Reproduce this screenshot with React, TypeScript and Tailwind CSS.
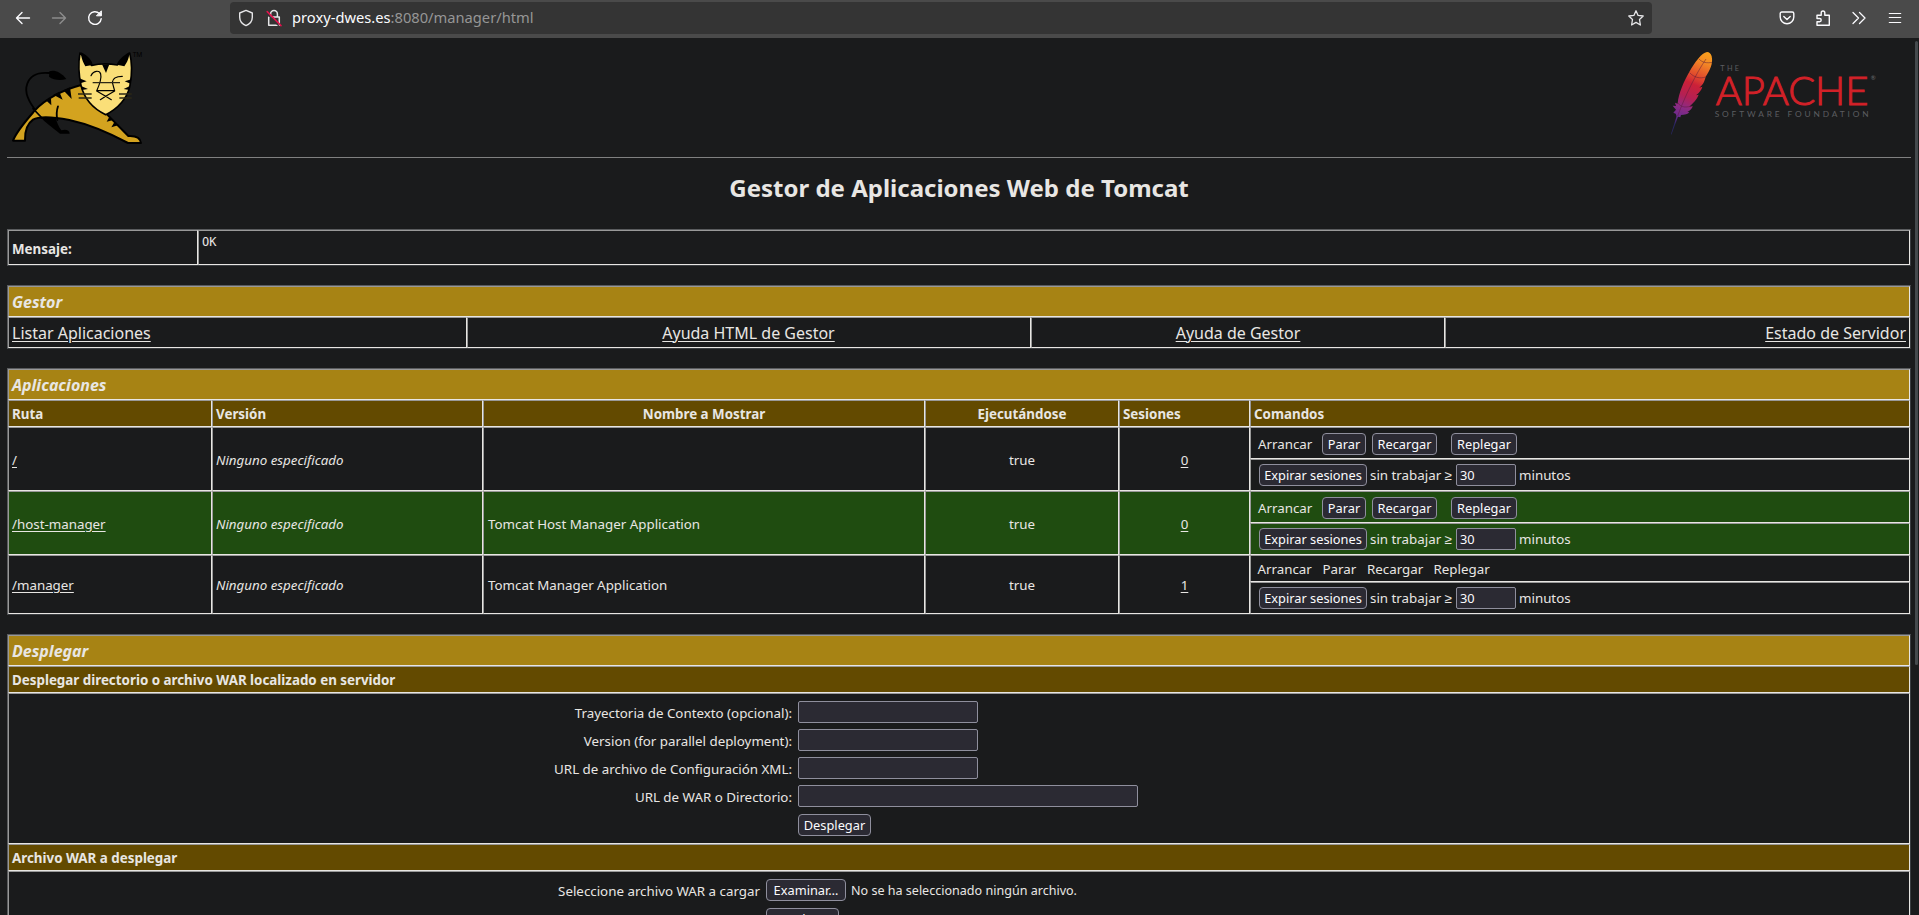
import type { ReactNode } from "react";

const CELL = "border border-t-[#999999] border-l-[#999999] border-r-[#e8e6e3] border-b-[#e8e6e3]";
const FRAME = "w-[1904px] border border-t-[#5a5c5e] border-l-[#5a5c5e] border-r-[#3a3d40] border-b-[#3a3d40]";

function Title({ children }: { children: ReactNode }) {
  return (
    <div className={`${CELL} flex h-[31px] items-center bg-[#a78314] px-[3px] text-[16px] font-bold italic`}>
      {children}
    </div>
  );
}

function Header({ children, className = "" }: { children: ReactNode; className?: string }) {
  return (
    <div className={`${CELL} flex h-[27px] items-center bg-[#634a00] px-[3px] pt-px text-[13.37px] font-bold ${className}`}>
      {children}
    </div>
  );
}

function Button({ children, className = "" }: { children: ReactNode; className?: string }) {
  return (
    <button
      className={`flex h-[22px] items-center justify-center rounded-[4px] border border-[#8f8f9d] bg-[#2b2a33] pt-px text-[12.8px] whitespace-nowrap text-[#fbfbfe] ${className}`}
    >
      {children}
    </button>
  );
}

function Link({ children }: { children: ReactNode }) {
  return <a className="underline decoration-1 underline-offset-2">{children}</a>;
}

interface AppRow {
  path: string;
  name: string;
  sessions: number;
  self?: boolean;
  even?: boolean;
}

const apps: AppRow[] = [
  { path: "/", name: "", sessions: 0 },
  { path: "/host-manager", name: "Tomcat Host Manager Application", sessions: 0, even: true },
  { path: "/manager", name: "Tomcat Manager Application", sessions: 1, self: true },
];

function ApplicationRow({ app }: { app: AppRow }) {
  const bg = app.even ? "bg-[#1f4c10]" : "";
  return (
    <div className={`grid grid-cols-[204px_271px_442px_194px_131px_660px] text-[13.33px] ${bg}`}>
      <div className={`${CELL} flex items-center px-[3px] pt-[3px]`}>
        <Link>{app.path}</Link>
      </div>
      <div className={`${CELL} flex items-center px-[3px] pt-[3px] italic`}>Ninguno especificado</div>
      <div className={`${CELL} flex items-center px-[4px] pt-[3px]`}>{app.name}</div>
      <div className={`${CELL} flex items-center justify-center pt-[3px]`}>true</div>
      <div className={`${CELL} flex items-center justify-center pt-[3px]`}>
        <Link>{app.sessions}</Link>
      </div>
      <div>
        {app.self ? (
          <div className={`${CELL} flex h-[27px] items-center pt-[3px] pl-[6.5px]`}>
            <span className="w-[65px]">Arrancar</span>
            <span className="w-[44.5px]">Parar</span>
            <span className="w-[66.5px]">Recargar</span>
            <span>Replegar</span>
          </div>
        ) : (
          <div className={`${CELL} flex h-[32px] items-center pt-[2px] pl-[7px]`}>
            <span className="w-[64px] pt-px">Arrancar</span>
            <Button className="w-[44px]">Parar</Button>
            <Button className="ml-[6px] w-[65px]">Recargar</Button>
            <Button className="ml-[14px] w-[66px]">Replegar</Button>
          </div>
        )}
        <div className={`${CELL} flex h-[32px] items-center pl-[8px]`}>
          <Button className="w-[108px]">Expirar sesiones</Button>
          <span className="ml-[3px] w-[86px] pt-px whitespace-nowrap">sin trabajar ≥</span>
          <input
            defaultValue="30"
            className="h-[22px] w-[60px] rounded-[2px] border border-[#8f8f9d] bg-[#2b2a33] px-[3px] text-[12.8px] text-[#fbfbfe]"
          />
          <span className="ml-[3px] pt-px">minutos</span>
        </div>
      </div>
    </div>
  );
}

function Field({ label, className }: { label: string; className: string }) {
  return (
    <div className="flex h-[28px] items-center">
      <label className="w-[783px] pt-[3px] text-right">{label}</label>
      <input className={`ml-[6px] h-[22px] rounded-[2px] border border-[#8f8f9d] bg-[#2b2a33] ${className}`} />
    </div>
  );
}

function NavButton({ children, dim }: { children: ReactNode; dim?: boolean }) {
  return (
    <div className={`flex h-9 w-9 items-center justify-center ${dim ? "text-[#8c8c8c]" : "text-[#fbfbfe]"}`}>
      <svg
        width="16"
        height="16"
        viewBox="0 0 16 16"
        fill="none"
        stroke="currentColor"
        strokeWidth="1.4"
        strokeLinecap="round"
        strokeLinejoin="round"
      >
        {children}
      </svg>
    </div>
  );
}

function Toolbar() {
  return (
    <div className="flex h-[38px] items-start bg-[#4a4a4a] pl-[5px] pr-[6px]">
      <NavButton>
        <path d="M14.5 8H1.8M7 2.5 1.5 8 7 13.5" />
      </NavButton>
      <NavButton dim>
        <path d="M1.5 8h12.7M9 2.5 14.5 8 9 13.5" />
      </NavButton>
      <NavButton>
        <path d="M14.2 8.6A6.3 6.3 0 1 1 12.4 3.6L14 5" />
        <path d="M14.4 1.2V5.8H9.8Z" fill="currentColor" strokeWidth="1" />
      </NavButton>
      <div className="mt-[2px] ml-[117px] flex h-[32px] w-[1422px] items-center rounded-[4px] bg-[#343434] pl-[8px] pr-[8px]">
        <svg width="16" height="18" viewBox="0 0 16 18" fill="none" stroke="#e6e6e8" strokeWidth="1.4" strokeLinejoin="round">
          <path d="M8 1.4 14.3 4v4.200c0 3.600-2.200 6.600-6.300 8.400C3.900 14.800 1.700 11.800 1.700 8.200V4Z" />
        </svg>
        <svg className="ml-[12px]" width="16" height="18" viewBox="0 0 16 18" fill="none">
          <path
            d="M4.600 8V5A3.400 3.400 0 0 1 11.400 5V8M2.700 8H13.300V16.300H2.700Z"
            stroke="#e6e6e8"
            strokeWidth="1.5"
            strokeLinejoin="round"
          />
          <path d="M1 4.600 12.800 16.800" stroke="#343434" strokeWidth="1.600" />
          <path d="M1.200 2.600 15 16.600" stroke="#e2124c" strokeWidth="1.500" strokeLinecap="round" />
        </svg>
        <span className="ml-[10px] flex-1 pb-px text-[14.7px] text-[#fbfbfe]">
          proxy-dwes.es<span className="text-[#969696]">:8080/manager/html</span>
        </span>
        <svg width="16" height="16" viewBox="0 0 16 16" fill="none" stroke="#e6e6e8" strokeWidth="1.300" strokeLinejoin="round">
          <path d="M8 .8 10.100 5.400 15.200 6 11.500 9.500 12.400 15 8 12.400 3.600 15 4.500 9.500.8 6 5.900 5.400Z" />
        </svg>
      </div>
      <div className="ml-auto flex">
        <NavButton>
          <path d="M2.800 2H13.200A1.600 1.600 0 0 1 14.800 3.600V7A6.800 6.800 0 0 1 1.200 7V3.600A1.600 1.600 0 0 1 2.800 2ZM4.800 6.500 8 9.600 11.200 6.500" />
        </NavButton>
        <NavButton>
          <path d="M2 15.200V11.700H4.600A1.600 1.600 0 0 0 4.600 8.500H2V5.200H6.200V2.800A1.800 1.800 0 0 1 9.800 2.800V5.200H14.300V15.200Z" />
        </NavButton>
        <NavButton>
          <path d="M2 2.500 7.500 8 2 13.500M8.500 2.500 14 8 8.500 13.500" strokeWidth="1.300" />
        </NavButton>
        <NavButton>
          <path d="M2.300 3.500H13.700M2.300 7.500H13.700M2.300 12.500H13.700" strokeWidth="1.200" />
        </NavButton>
      </div>
    </div>
  );
}

function TomcatLogo() {
  return (
    <svg width="140" height="119" viewBox="21 24 420 357" fill="none" strokeLinecap="round" strokeLinejoin="round">
      <path d="M126 264C93 228 75 199 79 172C84 141 108 125 148 129" stroke="#000" strokeWidth="5.500" />
      <path d="M148 124C163 119 182 126 199 147C181 152 160 150 147 140Z" fill="#000" />
      <path d="M122 262 166 260C170 277 177 292 184 301C198 297 209 301 209 311H180C155 292 134 276 122 262Z" fill="#000" />
      <path
        d="M246 164C194 177 135 207 104 242C78 272 50 303 39 332H75C74 305 82 281 99 269C119 257 162 261 208 270C273 284 328 309 384 339H423C421 321 403 317 385 318L318 250Z"
        fill="#d3a31f"
        stroke="#000"
        strokeWidth="6"
      />
      <path d="M126 264 99 236" stroke="#000" strokeWidth="5" />
      <path d="M137 210 154 226 153 205ZM160 194 188 209 178 185ZM190 181 215 207 210 172Z" fill="#000" />
      <path d="M174 229C169 244 169 256 172 270" stroke="#000" strokeWidth="5.500" />
      <path d="M329 259 320 275 340 270ZM342 278 334 292 357 285Z" fill="#000" />
      <path
        d="M240 69C235 96 235 128 243 166C252 204 280 236 317 254C354 236 383 204 390 166C397 128 396 96 389 69L352 105C330 101 297 101 275 106Z"
        fill="#fadf78"
        stroke="#000"
        strokeWidth="5"
      />
      <path d="M243 67C263 76 280 96 277 105L256 109C250 98 243 85 243 67ZM388 67C368 77 352 95 351 104L373 109C381 98 388 85 388 67Z" fill="#000" />
      <path d="M306 103H328L318 129Z" fill="#000" />
      <path d="M238 145 260 154 241 160ZM241 167 264 177 246 180ZM394 148 374 154 392 161ZM390 168 371 177 388 180Z" fill="#000" />
      <path
        d="M273 137C280 121 299 120 302 132C306 147 294 174 290 183L317 199 334 209M367 139C350 139 338 144 337 157L344 183 317 199 301 209M290 182H344"
        stroke="#000"
        strokeWidth="3.500"
      />
      <path d="M278 158H360M234 192H275M236 204H275M357 192H395M358 204H395" stroke="#2d2816" strokeWidth="4" strokeLinecap="butt" />
      <text x="398" y="81" fontSize="20" fill="#000" textLength="29" fontFamily="Noto Sans, sans-serif">
        TM
      </text>
    </svg>
  );
}

function ApacheLogo() {
  return (
    <svg width="245" height="119" viewBox="318 114 735 357" fill="none">
      <defs>
        <linearGradient id="plume" x1="445" y1="156" x2="340" y2="400" gradientUnits="userSpaceOnUse">
          <stop offset="0" stopColor="#f9a11b" />
          <stop offset="0.12" stopColor="#f48b25" />
          <stop offset="0.3" stopColor="#e04a2d" />
          <stop offset="0.4" stopColor="#cb2138" />
          <stop offset="0.56" stopColor="#b32054" />
          <stop offset="0.68" stopColor="#8f2a82" />
          <stop offset="0.8" stopColor="#6c2b8c" />
          <stop offset="0.9" stopColor="#282662" />
        </linearGradient>
      </defs>
      <path
        d="M441 156C425 158 404 188 389 214C371 246 356 279 353 311L345 308 348 318 338 317 348 329 340 338 347 341C349 345 350 347 349 351L333 402 334 404 354 350 361 352 363 345C374 345 384 343 388 336L382 336C391 331 397 325 398 318L388 320C401 308 411 297 416 284L408 286C419 277 425 269 427 260L418 263C430 253 434 243 437 230C450 212 460 190 455 169C453 161 448 156 441 156Z"
        fill="url(#plume)"
      />
      <path
        d="M438 177C409 219 374 290 353 348M389 218C401 232 420 237 437 231M417 177C427 188 441 190 456 187M353 308C365 326 382 321 397 318"
        stroke="#5d1b38"
        strokeWidth="2"
        opacity=".75"
      />
      <g fontFamily="Lato, sans-serif">
        <text x="481" y="213" fontSize="22" fill="#5c5d60" textLength="56">
          THE
        </text>
        <text x="467" y="316" fontSize="120" fontWeight="300" fill="#d22128" stroke="#d22128" strokeWidth="3" textLength="458">
          APACHE
        </text>
        <text x="464" y="352" fontSize="25" fill="#5c5d60" textLength="462">
          SOFTWARE FOUNDATION
        </text>
        <text x="932" y="241" fontSize="18" fill="#6d6e71">
          ®
        </text>
      </g>
    </svg>
  );
}

export default function App() {
  return (
    <div className="h-[915px] w-[1919px] overflow-hidden bg-[#1a1b1c] font-['Noto_Sans',sans-serif] text-[#e8e6e3]">
      <Toolbar />
      <div className="flex h-[877px] justify-between overflow-hidden pl-[7px]">
        <main className="w-[1904px]">
          <header className="flex h-[120px] items-start justify-between border-b border-[#808080]">
            <TomcatLogo />
            <ApacheLogo />
          </header>
          <h1 className="flex h-[71px] items-start justify-center pt-[13px] text-[24px] leading-[33px] font-bold">
            Gestor de Aplicaciones Web de Tomcat
          </h1>

          <section className={`${FRAME} grid grid-cols-[190px_1712px]`}>
            <div className={`${CELL} flex h-[35px] items-center px-[3px] pt-[3px] text-[13.37px] font-bold`}>Mensaje:</div>
            <div className={`${CELL} h-[35px] px-[3px] pt-[2px] font-['DejaVu_Sans_Mono',monospace] text-[12px]`}>OK</div>
          </section>

          <section className={`${FRAME} mt-[19px]`}>
            <Title>Gestor</Title>
            <nav className="grid grid-cols-[459px_564px_414px_465px] text-[16px]">
              <div className={`${CELL} flex h-[31px] items-center px-[3px]`}>
                <Link>Listar Aplicaciones</Link>
              </div>
              <div className={`${CELL} flex h-[31px] items-center justify-center pr-px`}>
                <Link>Ayuda HTML de Gestor</Link>
              </div>
              <div className={`${CELL} flex h-[31px] items-center justify-center`}>
                <Link>Ayuda de Gestor</Link>
              </div>
              <div className={`${CELL} flex h-[31px] items-center justify-end px-[3px]`}>
                <Link>Estado de Servidor</Link>
              </div>
            </nav>
          </section>

          <section className={`${FRAME} mt-[19px]`}>
            <Title>Aplicaciones</Title>
            <div className="grid grid-cols-[204px_271px_442px_194px_131px_660px]">
              <Header>Ruta</Header>
              <Header>Versión</Header>
              <Header className="justify-center">Nombre a Mostrar</Header>
              <Header className="justify-center">Ejecutándose</Header>
              <Header>Sesiones</Header>
              <Header>Comandos</Header>
            </div>
            {apps.map((app) => (
              <ApplicationRow key={app.path} app={app} />
            ))}
          </section>

          <section className={`${FRAME} mt-[19px] text-[13.33px]`}>
            <Title>Desplegar</Title>
            <Header>Desplegar directorio o archivo WAR localizado en servidor</Header>
            <form className={`${CELL} h-[151px] pt-[4px]`}>
              <Field label="Trayectoria de Contexto (opcional):" className="w-[180px]" />
              <Field label="Version (for parallel deployment):" className="w-[180px]" />
              <Field label="URL de archivo de Configuración XML:" className="w-[180px]" />
              <Field label="URL de WAR o Directorio:" className="w-[340px]" />
              <Button className="mt-[4px] ml-[789px] w-[73px]">Desplegar</Button>
            </form>
            <Header>Archivo WAR a desplegar</Header>
            <form className={`${CELL} h-[67px] pt-[7px]`}>
              <div className="flex h-[22px] items-center">
                <label className="w-[751px] pt-[3px] text-right">Seleccione archivo WAR a cargar</label>
                <Button className="ml-[6px] w-[80px]">Examinar…</Button>
                <span className="ml-[5px] pt-[2px] text-[12.55px]">No se ha seleccionado ningún archivo.</span>
              </div>
              <Button className="mt-[7px] ml-[757px] w-[73px]">Desplegar</Button>
            </form>
          </section>
        </main>
        <div className="mt-[3px] mr-px h-[624px] w-[3px] rounded-full bg-[#454a4d]" />
      </div>
    </div>
  );
}
